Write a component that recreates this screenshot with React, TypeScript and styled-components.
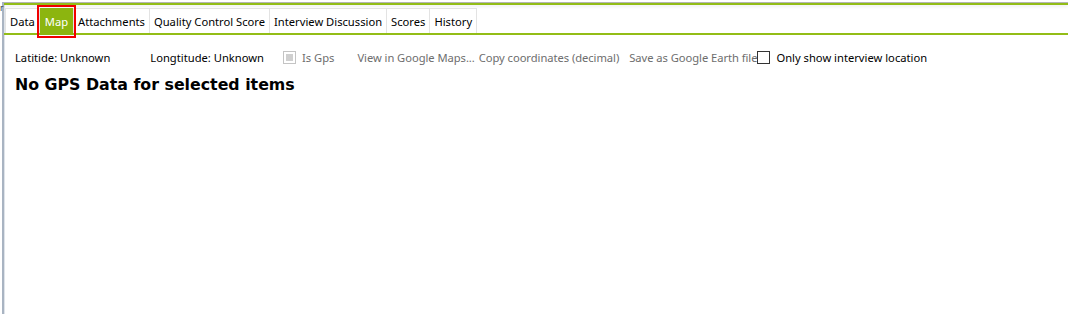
import React from 'react';
import styled, { createGlobalStyle } from 'styled-components';

const GlobalStyle = createGlobalStyle`
  html, body {
    margin: 0;
    padding: 0;
    background: #ffffff;
  }
  body {
    font-family: "Noto Sans", "Open Sans", Arial, sans-serif;
    font-size: 11.2px;
    color: #000;
  }
`;

const tabs = [
  'Data',
  'Map',
  'Attachments',
  'Quality Control Score',
  'Interview Discussion',
  'Scores',
  'History',
];

const App = () => {
  return (
    <>
      <GlobalStyle />
      <Window>
        <CutGlyph>r</CutGlyph>
        <Panel>
          <TopRule />
          <TabStrip>
            {tabs.map((t) => (
              <Tab key={t} $active={t === 'Map'}>
                {t}
              </Tab>
            ))}
          </TabStrip>
          <Content>
            <Toolbar>
              <Label>Latitide: Unknown</Label>
              <Label $space={40}>Longtitude: Unknown</Label>
              <CheckItem $space={19} $disabled>
                <Box $disabled>
                  <Fill />
                </Box>
                Is Gps
              </CheckItem>
              <LinkText $space={23}>View in Google Maps...</LinkText>
              <LinkText $space={4}>Copy coordinates (decimal)</LinkText>
              <LinkText $space={10}>Save as Google Earth file</LinkText>
              <CheckItem>
                <Box />
                Only show interview location
              </CheckItem>
            </Toolbar>
            <Heading>No GPS Data for selected items</Heading>
          </Content>
        </Panel>
      </Window>
    </>
  );
};

const Window = styled.div`
  position: relative;
  height: 314px;
  overflow: hidden;
  padding-left: 2px;
`;

const CutGlyph = styled.span`
  position: absolute;
  left: 0;
  top: 4px;
  font-family: "DejaVu Sans", sans-serif;
  font-size: 8px;
  line-height: 10px;
  color: #333;
`;

const Panel = styled.div`
  height: 100%;
  border-left: 2px solid #a9b4c2;
  box-shadow: inset 1px 0 0 #dfe4ea;
`;

const TopRule = styled.div`
  height: 2px;
  margin-top: 2px;
  border-top: 1px solid #b5b5b5;
  background: #93bd17;
  box-shadow: 0 2px 3px rgba(0, 0, 0, 0.06);
`;

const TabStrip = styled.div`
  display: flex;
  align-items: flex-end;
  height: 30px;
  padding-left: 2px;
  border-bottom: 2px solid #93bd17;
  box-sizing: border-box;
`;

const Tab = styled.div<{ $active?: boolean }>`
  display: flex;
  align-items: center;
  height: 25px;
  padding: 0 4px;
  box-sizing: border-box;
  white-space: nowrap;
  background: ${(p) => (p.$active ? '#8cb50f' : '#ffffff')};
  color: ${(p) => (p.$active ? '#ffffff' : '#000000')};
  border: 1px solid #e3e3e3;
  border-bottom: none;
  margin-left: -1px;
  position: relative;
  z-index: ${(p) => (p.$active ? 1 : 0)};
  ${(p) =>
    p.$active
      ? 'height: 27px; margin: 0 1px -2px 0; border: none; outline: 2px solid #f00000; outline-offset: 1px; padding: 0 5px;'
      : ''}
`;

const Content = styled.div`
  padding: 14px 0 0 11px;
`;

const Toolbar = styled.div`
  display: flex;
  align-items: center;
  height: 17px;
  white-space: nowrap;
`;

const Label = styled.span<{ $space?: number }>`
  margin-left: ${(p) => p.$space ?? 0}px;
  color: #000;
`;

const LinkText = styled.span<{ $space?: number }>`
  margin-left: ${(p) => p.$space ?? 0}px;
  color: #6d6d6d;
  letter-spacing: -0.05px;
`;

const CheckItem = styled.label<{ $space?: number; $disabled?: boolean }>`
  display: flex;
  align-items: center;
  gap: 6px;
  margin-left: ${(p) => p.$space ?? 0}px;
  color: ${(p) => (p.$disabled ? '#6d6d6d' : '#000')};
`;

const Box = styled.span<{ $disabled?: boolean }>`
  display: flex;
  align-items: center;
  justify-content: center;
  width: 13px;
  height: 13px;
  box-sizing: border-box;
  border: 1px solid ${(p) => (p.$disabled ? '#c4c4c4' : '#333333')};
  background: #fff;
`;

const Fill = styled.span`
  width: 7px;
  height: 7px;
  background: #cfcfcf;
`;

const Heading = styled.div`
  margin-top: 9px;
  font-family: "DejaVu Sans", Verdana, sans-serif;
  font-weight: bold;
  font-size: 15.8px;
`;

export default App;
